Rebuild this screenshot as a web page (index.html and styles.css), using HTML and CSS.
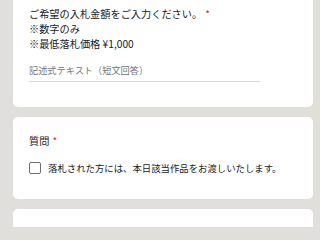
FILE: index.html
```html
<!DOCTYPE html>
<html lang="ja">
<head>
<meta charset="utf-8">
<link rel="stylesheet" href="styles.css">
</head>
<body>
<main class="form">
  <section class="card card-first">
    <div class="q-title">ご希望の入札金額をご入力ください。<span class="req">*</span><br>※数字のみ<br>※最低落札価格 ¥1,000</div>
    <div class="short-input">記述式テキスト（短文回答）</div>
  </section>
  <section class="card card-check">
    <div class="q-title">質問<span class="req">*</span></div>
    <label class="check-row"><span class="box"></span><span class="check-label">落札された方には、本日該当作品をお渡しいたします。</span></label>
  </section>
  <section class="card">
    <div class="q-title">お名前<span class="req">*</span></div>
  </section>
</main>
</body>
</html>
```

FILE: styles.css
```css
html, body {
  margin: 0;
  height: 227px;
  overflow: hidden;
  background: #e1dfdc;
}
body {
  font-family: "Noto Sans CJK JP", "Noto Sans", sans-serif;
  color: #202124;
}
.form {
  display: flex;
  flex-direction: column;
  gap: 10px;
  padding-left: 13px;
  margin-top: -10px;
}
.card {
  box-sizing: border-box;
  width: 300px;
  background: #fff;
  border-radius: 5px;
  padding: 16px 16px 25px 16px;
}
.card-check {
  padding-bottom: 24px;
}
.q-title {
  font-size: 10.2px;
  line-height: 15px;
  white-space: nowrap;
}
.req {
  color: #d93025;
  margin-left: 3px;
}
.short-input {
  margin-top: 13px;
  width: 231px;
  font-size: 9.2px;
  line-height: 13px;
  padding-bottom: 3.5px;
  color: #70757a;
  border-bottom: 1px solid #d6d6d6;
}
.check-row {
  display: flex;
  align-items: center;
  gap: 7px;
  margin-top: 13px;
  height: 14px;
}
.box {
  box-sizing: border-box;
  width: 12px;
  height: 12px;
  border: 1.3px solid #6f6f6f;
  border-radius: 2px;
  flex: none;
}
.check-label {
  font-size: 9.4px;
  line-height: 14px;
  white-space: nowrap;
}
```
